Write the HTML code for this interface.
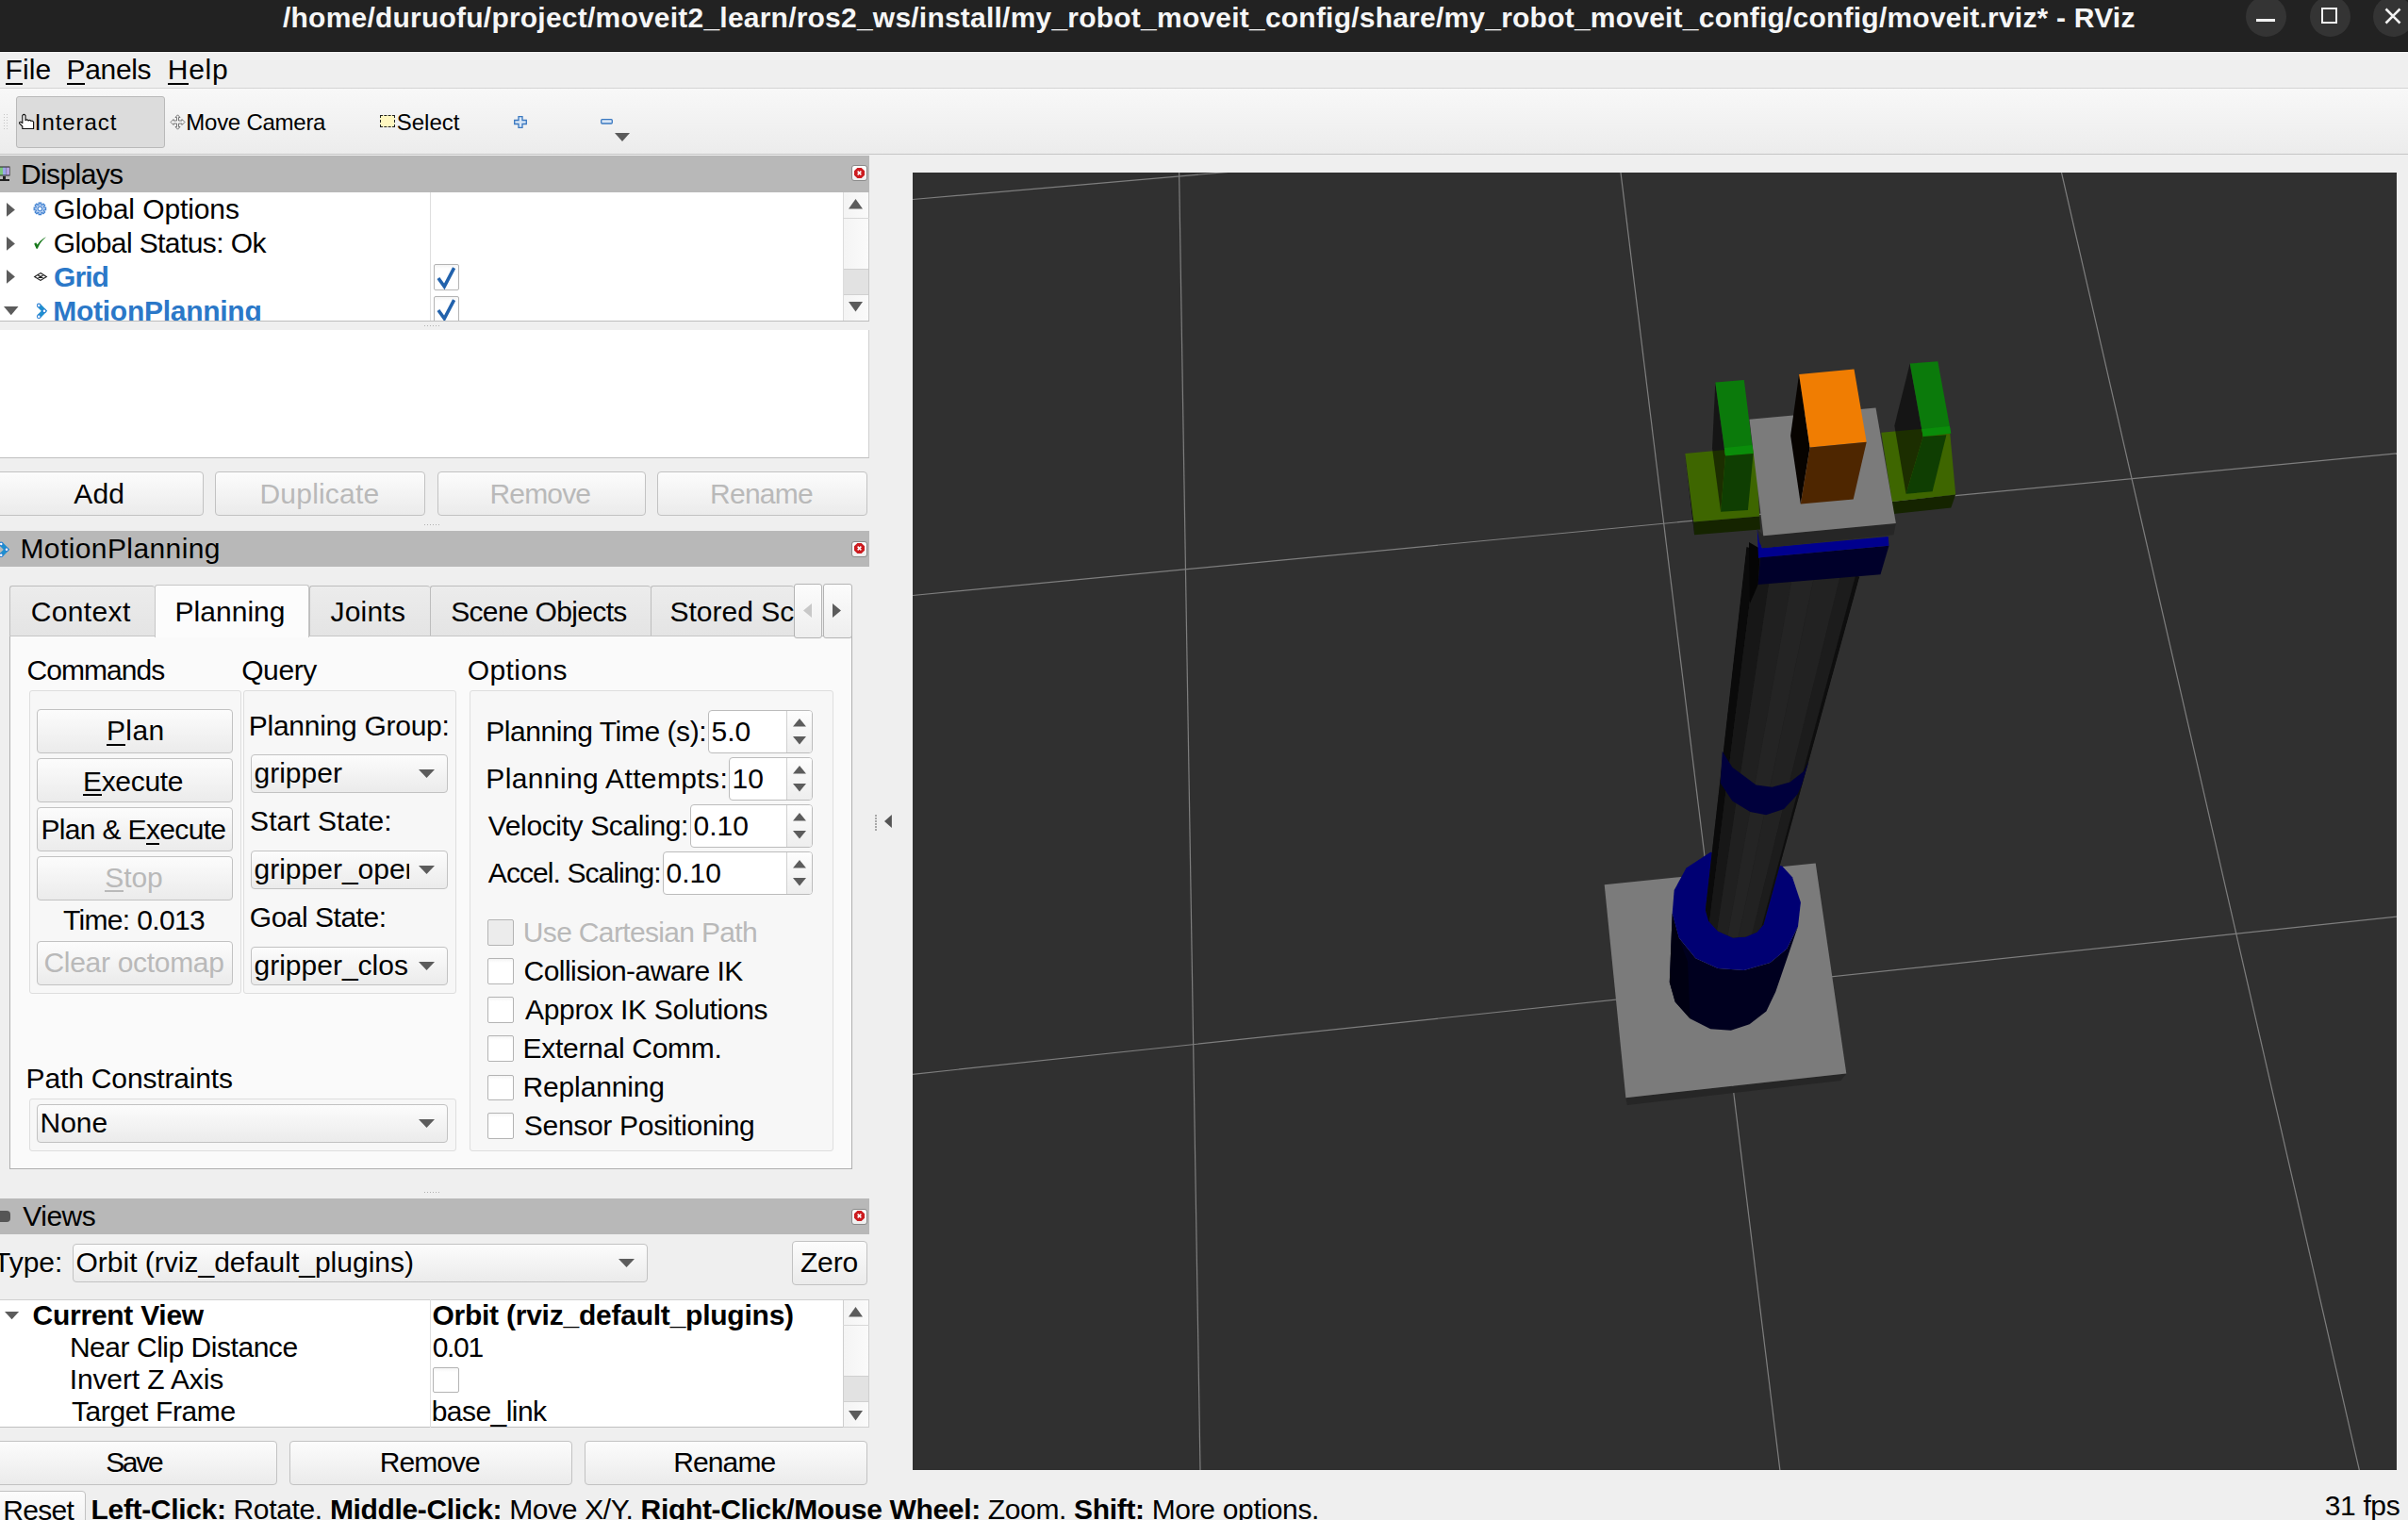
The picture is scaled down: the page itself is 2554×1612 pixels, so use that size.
<!DOCTYPE html>
<html><head><meta charset="utf-8">
<style>
*{box-sizing:border-box;margin:0;padding:0}
html,body{width:2554px;height:1612px;overflow:hidden}
body{position:relative;background:#efefef;font-family:"Liberation Sans",sans-serif;font-size:30px;color:#000}
.a{position:absolute}
.t{position:absolute;white-space:nowrap;line-height:1}
u{text-decoration:none;border-bottom:2px solid currentColor;display:inline-block;line-height:0.93}
svg{overflow:visible}
</style></head>
<body>
<div class="a" style="left:0.0px;top:0.0px;width:2554.0px;height:54.0px;background:#222222"></div>
<div class="a" style="left:0.0px;top:54.0px;width:2554.0px;height:1.0px;background:#0e0e0e"></div>
<div class="t" style="left:300.0px;top:3.9px;font-size:30px;font-weight:bold;color:#f6f6f6;letter-spacing:0.22px">/home/duruofu/project/moveit2_learn/ros2_ws/install/my_robot_moveit_config/share/my_robot_moveit_config/config/moveit.rviz* - RViz</div>
<div class="a" style="left:2381.5px;top:-4.5px;width:43px;height:43px;border-radius:50%;background:#343434"></div>
<div class="a" style="left:2449.5px;top:-4.5px;width:43px;height:43px;border-radius:50%;background:#343434"></div>
<div class="a" style="left:2516.5px;top:-4.5px;width:43px;height:43px;border-radius:50%;background:#343434"></div>
<div class="a" style="left:2393px;top:20px;width:20px;height:2.5px;background:#f2f2f2"></div>
<div class="a" style="left:2462px;top:8px;width:17px;height:17px;border:2.4px solid #f2f2f2"></div>
<svg class="a" style="left:2529px;top:8px" width="18" height="18"><path d="M1.5 1.5L16.5 16.5M16.5 1.5L1.5 16.5" stroke="#f2f2f2" stroke-width="2.6"/></svg>
<div class="a" style="left:0.0px;top:55.0px;width:2554.0px;height:38.0px;background:#efefef"></div>
<div class="a" style="left:0.0px;top:93.0px;width:2554.0px;height:1.0px;background:#d4d4d4"></div>
<div class="t" style="left:5.5px;top:59.3px;font-size:30px;letter-spacing:0.150px;"><u>F</u>ile</div>
<div class="t" style="left:70.5px;top:59.3px;font-size:30px;letter-spacing:-0.330px;"><u>P</u>anels</div>
<div class="t" style="left:177.7px;top:59.3px;font-size:30px;letter-spacing:0.767px;"><u>H</u>elp</div>
<div class="a" style="left:0.0px;top:94.0px;width:2554.0px;height:69.0px;background:linear-gradient(#f8f8f8,#ececec)"></div>
<div class="a" style="left:0.0px;top:163.0px;width:2554.0px;height:1.0px;background:#c6c6c6"></div>
<div class="a" style="left:4.0px;top:121.0px;width:1.0px;height:1.0px;background:#c4c4c4"></div>
<div class="a" style="left:7.0px;top:121.0px;width:1.0px;height:1.0px;background:#c4c4c4"></div>
<div class="a" style="left:4.0px;top:124.0px;width:1.0px;height:1.0px;background:#c4c4c4"></div>
<div class="a" style="left:7.0px;top:124.0px;width:1.0px;height:1.0px;background:#c4c4c4"></div>
<div class="a" style="left:4.0px;top:127.0px;width:1.0px;height:1.0px;background:#c4c4c4"></div>
<div class="a" style="left:7.0px;top:127.0px;width:1.0px;height:1.0px;background:#c4c4c4"></div>
<div class="a" style="left:4.0px;top:130.0px;width:1.0px;height:1.0px;background:#c4c4c4"></div>
<div class="a" style="left:7.0px;top:130.0px;width:1.0px;height:1.0px;background:#c4c4c4"></div>
<div class="a" style="left:4.0px;top:133.0px;width:1.0px;height:1.0px;background:#c4c4c4"></div>
<div class="a" style="left:7.0px;top:133.0px;width:1.0px;height:1.0px;background:#c4c4c4"></div>
<div class="a" style="left:4.0px;top:136.0px;width:1.0px;height:1.0px;background:#c4c4c4"></div>
<div class="a" style="left:7.0px;top:136.0px;width:1.0px;height:1.0px;background:#c4c4c4"></div>
<div class="a" style="left:17.0px;top:102.0px;width:157.5px;height:54.5px;border:1px solid #b9b9b9;border-radius:3px;background:#dcdcdc"></div>
<svg class="a" style="left:0;top:0" width="1" height="1"><path d="M23.8 136.5 L23.8 134 L20.6 130.8 Q20.3 129 22 129.3 L23.8 130.6 L23.8 122.6 Q25.4 120.2 27 122.6 L27 127.6 Q28.5 126.3 30 127.6 L30 128 Q31.5 126.8 33 128.3 Q34.6 127.6 35.6 129.3 L35.6 136.5 Z" fill="#fff" stroke="#111" stroke-width="1.15" stroke-linejoin="round"/></svg>
<div class="t" style="left:36.8px;top:118.4px;font-size:24px;letter-spacing:0.929px;">Interact</div>
<svg class="a" style="left:180px;top:121px" width="17" height="17" viewBox="0 0 17 17"><path d="M8.5 0.8L11 3.5H9.5V7H13V5.5L16 8.5L13 11.5V10H9.5V13.5H11L8.5 16.2L6 13.5H7.5V10H4V11.5L1 8.5L4 5.5V7H7.5V3.5H6Z" fill="#f4f4f4" stroke="#666" stroke-width="0.9"/></svg>
<div class="t" style="left:197.3px;top:118.4px;font-size:24px;letter-spacing:-0.255px;">Move Camera</div>
<div class="a" style="left:403px;top:122px;width:16px;height:13px;border:1.2px dashed #222;background:#fff7c0"></div>
<div class="t" style="left:420.8px;top:118.3px;font-size:24px;letter-spacing:-0.020px;">Select</div>
<svg class="a" style="left:545px;top:122.5px" width="14" height="13" viewBox="0 0 14 13"><path d="M5 0.7H9V4.5H13.3V8.5H9V12.3H5V8.5H0.7V4.5H5Z" fill="#d8e6f6" stroke="#3a78c0" stroke-width="1.3"/></svg>
<svg class="a" style="left:637px;top:126px" width="13" height="6" viewBox="0 0 13 6"><rect x="0.7" y="0.7" width="11.6" height="4.3" rx="1" fill="#d8e6f6" stroke="#3a78c0" stroke-width="1.3"/></svg>
<svg class="a" style="left:652.0px;top:141.0px" width="16.0" height="9.0"><polygon points="0,0 16,0 8.0,9" fill="#5a5a5a"/></svg>
<div class="a" style="left:0.0px;top:165.0px;width:922.0px;height:39.0px;background:#b8b8b8"></div>
<svg class="a" style="left:-2px;top:176px" width="14" height="18" viewBox="0 0 14 18"><rect x="0.5" y="0.5" width="12" height="10" fill="#222"/><rect x="1.5" y="1.5" width="3.5" height="8" fill="#7ac77a"/><rect x="5" y="1.5" width="3.5" height="8" fill="#9aa6e6"/><rect x="8.5" y="1.5" width="3.5" height="8" fill="#b4a0e0"/><rect x="5" y="11" width="3" height="3" fill="#222"/><rect x="1" y="14" width="11" height="2" fill="#222"/></svg>
<div class="t" style="left:22.0px;top:169.9px;font-size:30px;letter-spacing:-0.607px;">Displays</div>
<div class="a" style="left:902.5px;top:175px;width:17px;height:17px;border:1px solid #8a8a8a;border-radius:3px;background:linear-gradient(#fdfdfd,#eeeeee)"></div>
<svg class="a" style="left:905.5px;top:177.5px" width="11" height="11" viewBox="0 0 10 10"><polygon points="3,0 7,0 10,3 10,7 7,10 3,10 0,7 0,3" fill="#cc1b1f"/><path d="M3.3 3.3L6.7 6.7M6.7 3.3L3.3 6.7" stroke="#fff" stroke-width="1.3"/></svg>
<div class="a" style="left:0.0px;top:204.0px;width:894.0px;height:136.0px;background:#fff"></div>
<div class="a" style="left:456.0px;top:204.0px;width:1.0px;height:136.0px;background:#dedede"></div>
<div class="a" style="left:0.0px;top:340.0px;width:922.0px;height:1.0px;background:#bdbdbd"></div>
<div class="a" style="left:894.0px;top:204.0px;width:28.0px;height:136.0px;background:linear-gradient(90deg,#f4f4f4,#fafafa);border-left:1px solid #dcdcdc;border-right:1px solid #c8c8c8"></div>
<div class="a" style="left:894.0px;top:231.0px;width:28.0px;height:1.0px;background:#d8d8d8"></div>
<div class="a" style="left:895.0px;top:284.5px;width:26.0px;height:28.0px;background:#e2e2e2;border-top:1px solid #d0d0d0;border-bottom:1px solid #d0d0d0"></div>
<svg class="a" style="left:900.0px;top:210.5px" width="15.0" height="10.5"><polygon points="0,10.5 15,10.5 7.5,0" fill="#5c5c5c"/></svg>
<svg class="a" style="left:900.0px;top:320.0px" width="15.0" height="10.5"><polygon points="0,0 15,0 7.5,10.5" fill="#5c5c5c"/></svg>
<div class="a" style="left:0;top:204px;width:894px;height:136px;overflow:hidden">
<svg class="a" style="left:7.3px;top:10.6px" width="8.9" height="14.8"><polygon points="0,0 8.899999999999999,7.4 0,14.8" fill="#5c5c5c"/></svg>
<div class="t" style="left:56.8px;top:3.2px;font-size:30px;letter-spacing:-0.100px;">Global Options</div>
<svg class="a" style="left:7.3px;top:46.5px" width="8.9" height="14.8"><polygon points="0,0 8.899999999999999,7.399999999999999 0,14.799999999999997" fill="#5c5c5c"/></svg>
<div class="t" style="left:56.8px;top:39.1px;font-size:30px;letter-spacing:-0.594px;">Global Status: Ok</div>
<svg class="a" style="left:7.3px;top:82.2px" width="8.9" height="14.8"><polygon points="0,0 8.899999999999999,7.399999999999999 0,14.799999999999997" fill="#5c5c5c"/></svg>
<div class="t" style="left:57.0px;top:74.8px;font-size:30px;font-weight:bold;color:#2b78c8;letter-spacing:-0.933px;">Grid</div>
<svg class="a" style="left:4.0px;top:121.0px" width="15.5" height="9.2"><polygon points="0,0 15.5,0 7.75,9.199999999999989" fill="#5c5c5c"/></svg>
<div class="t" style="left:56.3px;top:110.6px;font-size:30px;font-weight:bold;color:#2b78c8;letter-spacing:-0.273px;">MotionPlanning</div>
</div>
<svg class="a" style="left:0;top:0" width="1" height="1"><path d="M46.79 220.04 L48.67 220.13 L48.67 222.67 L46.79 222.76 L46.47 223.55 L47.73 224.94 L45.94 226.73 L44.55 225.47 L43.76 225.79 L43.67 227.67 L41.13 227.67 L41.04 225.79 L40.25 225.47 L38.86 226.73 L37.07 224.94 L38.33 223.55 L38.01 222.76 L36.13 222.67 L36.13 220.13 L38.01 220.04 L38.33 219.25 L37.07 217.86 L38.86 216.07 L40.25 217.33 L41.04 217.01 L41.13 215.13 L43.67 215.13 L43.76 217.01 L44.55 217.33 L45.94 216.07 L47.73 217.86 L46.47 219.25Z" fill="#b3cdf0" stroke="#3d7fd0" stroke-width="1.1"/><circle cx="42.4" cy="221.4" r="2.4" fill="none" stroke="#3d7fd0" stroke-width="1"/><circle cx="42.4" cy="221.4" r="1.3" fill="#fff"/></svg>
<svg class="a" style="left:0;top:0" width="1" height="1"><path d="M36.2 258.5 L38.2 257.2 L39.6 259.6 C41.5 256.5 44.5 253.2 49 251.2 C45.5 254 42 258 39.8 263.8 L38.6 263.8 Z" fill="#16781a"/></svg>
<svg class="a" style="left:0;top:0" width="1" height="1"><path d="M43 289.6L49.3 293.5L43 297.4L36.7 293.5Z M39.85 291.55L46.15 295.45 M46.15 291.55L39.85 295.45" fill="none" stroke="#1a1a1a" stroke-width="1.15"/></svg>
<svg class="a" style="left:0;top:0" width="1" height="1"><path d="M41.2 323.9L47.0 329.79999999999995L41.2 335.7" fill="none" stroke="#1f8fcf" stroke-width="4.6" stroke-linejoin="miter"/><circle cx="41.2" cy="323.9" r="2.3" fill="#2a7fd4"/><circle cx="41.2" cy="323.9" r="1.25" fill="#fff"/><circle cx="47.0" cy="329.79999999999995" r="2.3" fill="#2a7fd4"/><circle cx="47.0" cy="329.79999999999995" r="1.25" fill="#fff"/><circle cx="41.2" cy="335.7" r="2.3" fill="#2a7fd4"/><circle cx="41.2" cy="335.7" r="1.25" fill="#fff"/></svg>
<div class="a" style="left:459.5px;top:280.0px;width:27.5px;height:28.0px;border:1px solid #b4b4b4;border-radius:2px;background:linear-gradient(#f4f4f4 0,#fff 4px)"></div>
<svg class="a" style="left:459.5px;top:280.0px" width="27.5" height="28.0" viewBox="0 0 28 28"><path d="M5 15 L11.5 24 L22 4" fill="none" stroke="#2262ac" stroke-width="3.6" stroke-linejoin="miter"/></svg>
<div class="a" style="left:450px;top:300px;width:50px;height:40px;overflow:hidden">
<div class="a" style="left:9.5px;top:14.0px;width:27.5px;height:28.0px;border:1px solid #b4b4b4;border-radius:2px;background:linear-gradient(#f4f4f4 0,#fff 4px)"></div>
<svg class="a" style="left:9.5px;top:14.0px" width="27.5" height="28.0" viewBox="0 0 28 28"><path d="M5 15 L11.5 24 L22 4" fill="none" stroke="#2262ac" stroke-width="3.6" stroke-linejoin="miter"/></svg>
</div>
<div class="a" style="left:450.0px;top:344.5px;width:1.0px;height:1.0px;background:#b0b0b0"></div>
<div class="a" style="left:453.0px;top:344.5px;width:1.0px;height:1.0px;background:#b0b0b0"></div>
<div class="a" style="left:456.0px;top:344.5px;width:1.0px;height:1.0px;background:#b0b0b0"></div>
<div class="a" style="left:459.0px;top:344.5px;width:1.0px;height:1.0px;background:#b0b0b0"></div>
<div class="a" style="left:462.0px;top:344.5px;width:1.0px;height:1.0px;background:#b0b0b0"></div>
<div class="a" style="left:465.0px;top:344.5px;width:1.0px;height:1.0px;background:#b0b0b0"></div>
<div class="a" style="left:0.0px;top:349.5px;width:922.0px;height:136.5px;background:#fff;border-bottom:1px solid #c0c0c0;border-right:1px solid #d0d0d0"></div>
<div class="a" style="left:-8.0px;top:499.5px;width:223.5px;height:47.0px;border:1px solid #c2c2c2;border-radius:4px;background:linear-gradient(#fcfcfc,#ebebeb);"></div>
<div class="t" style="left:78.3px;top:508.5px;font-size:30px;letter-spacing:0.100px;">Add</div>
<div class="a" style="left:228.0px;top:499.5px;width:222.5px;height:47.0px;border:1px solid #c2c2c2;border-radius:4px;background:linear-gradient(#fcfcfc,#ebebeb);"></div>
<div class="t" style="left:275.5px;top:508.5px;font-size:30px;color:#b9b9b9;letter-spacing:0.200px;">Duplicate</div>
<div class="a" style="left:463.5px;top:499.5px;width:221.0px;height:47.0px;border:1px solid #c2c2c2;border-radius:4px;background:linear-gradient(#fcfcfc,#ebebeb);"></div>
<div class="t" style="left:519.5px;top:508.5px;font-size:30px;color:#b9b9b9;letter-spacing:-0.840px;">Remove</div>
<div class="a" style="left:697.0px;top:499.5px;width:223.0px;height:47.0px;border:1px solid #c2c2c2;border-radius:4px;background:linear-gradient(#fcfcfc,#ebebeb);"></div>
<div class="t" style="left:753.1px;top:508.5px;font-size:30px;color:#b9b9b9;letter-spacing:-0.770px;">Rename</div>
<div class="a" style="left:450.0px;top:556.0px;width:1.0px;height:1.0px;background:#b0b0b0"></div>
<div class="a" style="left:453.0px;top:556.0px;width:1.0px;height:1.0px;background:#b0b0b0"></div>
<div class="a" style="left:456.0px;top:556.0px;width:1.0px;height:1.0px;background:#b0b0b0"></div>
<div class="a" style="left:459.0px;top:556.0px;width:1.0px;height:1.0px;background:#b0b0b0"></div>
<div class="a" style="left:462.0px;top:556.0px;width:1.0px;height:1.0px;background:#b0b0b0"></div>
<div class="a" style="left:465.0px;top:556.0px;width:1.0px;height:1.0px;background:#b0b0b0"></div>
<div class="a" style="left:0.0px;top:563.0px;width:922.0px;height:38.0px;background:#b8b8b8"></div>
<svg class="a" style="left:0;top:0" width="1" height="1"><path d="M1.2 576.9L7.0 582.8L1.2 588.6999999999999" fill="none" stroke="#1f8fcf" stroke-width="4.6" stroke-linejoin="miter"/><circle cx="1.2" cy="576.9" r="2.3" fill="#2a7fd4"/><circle cx="1.2" cy="576.9" r="1.25" fill="#fff"/><circle cx="7.0" cy="582.8" r="2.3" fill="#2a7fd4"/><circle cx="7.0" cy="582.8" r="1.25" fill="#fff"/><circle cx="1.2" cy="588.6999999999999" r="2.3" fill="#2a7fd4"/><circle cx="1.2" cy="588.6999999999999" r="1.25" fill="#fff"/></svg>
<div class="t" style="left:21.4px;top:566.8px;font-size:30px;letter-spacing:0.412px;">MotionPlanning</div>
<div class="a" style="left:902.5px;top:573.5px;width:17px;height:17px;border:1px solid #8a8a8a;border-radius:3px;background:linear-gradient(#fdfdfd,#eeeeee)"></div>
<svg class="a" style="left:905.5px;top:576.0px" width="11" height="11" viewBox="0 0 10 10"><polygon points="3,0 7,0 10,3 10,7 7,10 3,10 0,7 0,3" fill="#cc1b1f"/><path d="M3.3 3.3L6.7 6.7M6.7 3.3L3.3 6.7" stroke="#fff" stroke-width="1.3"/></svg>
<div class="a" style="left:9.5px;top:674.0px;width:894.0px;height:565.5px;background:#fafafa;border:1px solid #b0b0b0;border-top:none"></div>
<div class="a" style="left:9.5px;top:621.0px;width:154.0px;height:54.0px;border:1px solid #bdbdbd;border-right:none;border-radius:3px 3px 0 0;background:linear-gradient(#ececec,#e4e4e4)"></div>
<div class="a" style="left:327.5px;top:621.0px;width:128.0px;height:54.0px;border:1px solid #bdbdbd;border-right:none;border-radius:3px 3px 0 0;background:linear-gradient(#ececec,#e4e4e4)"></div>
<div class="a" style="left:455.5px;top:621.0px;width:234.0px;height:54.0px;border:1px solid #bdbdbd;border-right:none;border-radius:3px 3px 0 0;background:linear-gradient(#ececec,#e4e4e4)"></div>
<div class="a" style="left:689.5px;top:621.0px;width:152.5px;height:54.0px;border:1px solid #bdbdbd;border-right:none;border-radius:3px 3px 0 0;background:linear-gradient(#ececec,#e4e4e4)"></div>
<div class="a" style="left:9.5px;top:674.0px;width:894.0px;height:1.0px;background:#c6c6c6"></div>
<div class="a" style="left:0;top:600px;width:842px;height:80px;overflow:hidden">
<div class="t" style="left:32.8px;top:34.3px;font-size:30px;letter-spacing:0.342px;">Context</div>
<div class="t" style="left:350.5px;top:34.3px;font-size:30px;letter-spacing:0.210px;">Joints</div>
<div class="t" style="left:478.2px;top:34.3px;font-size:30px;letter-spacing:-0.663px;">Scene Objects</div>
<div class="t" style="left:710.5px;top:34.3px;font-size:30px;">Stored Scenes</div>
</div>
<div class="a" style="left:163.5px;top:619.5px;width:164.5px;height:56.0px;border:1px solid #c6c6c6;border-bottom:none;border-radius:3px 3px 0 0;background:#fcfcfc"></div>
<div class="t" style="left:185.5px;top:634.3px;font-size:30px;letter-spacing:0.036px;">Planning</div>
<div class="a" style="left:841.5px;top:619.0px;width:30.8px;height:57.5px;border:1px solid #c2c2c2;border-radius:4px;background:linear-gradient(#fcfcfc,#ebebeb);border-radius:3px;border-color:#b4b4b4;background:linear-gradient(#fcfcfc,#eeeeee)"></div>
<div class="a" style="left:872.5px;top:619.0px;width:31.0px;height:57.5px;border:1px solid #c2c2c2;border-radius:4px;background:linear-gradient(#fcfcfc,#ebebeb);border-radius:3px;border-color:#b4b4b4;background:linear-gradient(#fcfcfc,#eeeeee)"></div>
<svg class="a" style="left:852.0px;top:640.0px" width="9.0" height="15.0"><polygon points="9,0 0,7.5 9,15" fill="#c8c8c8"/></svg>
<svg class="a" style="left:883.0px;top:640.0px" width="9.0" height="15.0"><polygon points="0,0 9,7.5 0,15" fill="#5c5c5c"/></svg>
<div class="t" style="left:28.6px;top:695.6px;font-size:30px;letter-spacing:-0.957px;">Commands</div>
<div class="t" style="left:256.2px;top:695.6px;font-size:30px;letter-spacing:-0.400px;">Query</div>
<div class="t" style="left:495.8px;top:695.6px;font-size:30px;letter-spacing:0.392px;">Options</div>
<div class="a" style="left:30.5px;top:731.5px;width:225.0px;height:322.0px;border:1px solid #dedede;border-radius:3px;background:#f7f7f7"></div>
<div class="a" style="left:257.5px;top:731.5px;width:226.5px;height:322.0px;border:1px solid #dedede;border-radius:3px;background:#f7f7f7"></div>
<div class="a" style="left:497.5px;top:731.5px;width:386.0px;height:489.0px;border:1px solid #dedede;border-radius:3px;background:#f7f7f7"></div>
<div class="a" style="left:30.5px;top:1164.5px;width:453.5px;height:56.0px;border:1px solid #dedede;border-radius:3px;background:#f7f7f7"></div>
<div class="a" style="left:38.5px;top:751.5px;width:208.0px;height:47.0px;border:1px solid #c2c2c2;border-radius:4px;background:linear-gradient(#fcfcfc,#ebebeb);"></div>
<div class="t" style="left:112.9px;top:759.9px;font-size:30px;letter-spacing:0.433px;"><u>P</u>lan</div>
<div class="a" style="left:38.5px;top:803.5px;width:208.0px;height:47.0px;border:1px solid #c2c2c2;border-radius:4px;background:linear-gradient(#fcfcfc,#ebebeb);"></div>
<div class="t" style="left:88.0px;top:813.6px;font-size:30px;letter-spacing:-0.325px;"><u>E</u>xecute</div>
<div class="a" style="left:38.5px;top:855.5px;width:208.0px;height:47.0px;border:1px solid #c2c2c2;border-radius:4px;background:linear-gradient(#fcfcfc,#ebebeb);"></div>
<div class="t" style="left:43.4px;top:865.1px;font-size:30px;letter-spacing:-0.654px;">Plan &amp; E<u>x</u>ecute</div>
<div class="a" style="left:38.5px;top:907.5px;width:208.0px;height:47.0px;border:1px solid #c2c2c2;border-radius:4px;background:linear-gradient(#fcfcfc,#ebebeb);"></div>
<div class="t" style="left:111.3px;top:915.6px;font-size:30px;color:#b9b9b9;letter-spacing:-0.083px;"><u>S</u>top</div>
<div class="t" style="left:66.9px;top:960.9px;font-size:30px;letter-spacing:-0.650px;">Time: 0.013</div>
<div class="a" style="left:38.5px;top:997.5px;width:208.0px;height:47.0px;border:1px solid #c2c2c2;border-radius:4px;background:linear-gradient(#fcfcfc,#ebebeb);"></div>
<div class="t" style="left:46.5px;top:1006.2px;font-size:30px;color:#b9b9b9;letter-spacing:-0.308px;">Clear octomap</div>
<div class="t" style="left:263.8px;top:754.6px;font-size:30px;letter-spacing:-0.268px;">Planning Group:</div>
<div class="a" style="left:265.5px;top:799.5px;width:209.0px;height:41.0px;border:1px solid #c2c2c2;border-radius:4px;background:linear-gradient(#fcfcfc,#ebebeb);"></div>
<div class="t" style="left:269.5px;top:805.1px;font-size:30px;">gripper</div>
<svg class="a" style="left:444.0px;top:815.5px" width="17.0" height="9.0"><polygon points="0,0 17.0,0 8.5,9.0" fill="#5c5c5c"/></svg>
<div class="t" style="left:265.1px;top:856.3px;font-size:30px;letter-spacing:0.041px;">Start State:</div>
<div class="a" style="left:265.5px;top:901.5px;width:209.0px;height:41.0px;border:1px solid #c2c2c2;border-radius:4px;background:linear-gradient(#fcfcfc,#ebebeb);"></div>
<div class="a" style="left:269.5px;top:902.5px;width:164.2px;height:39.0px;overflow:hidden">
<div class="t" style="left:0.0px;top:4.6px;font-size:30px;">gripper_open</div>
</div>
<svg class="a" style="left:444.0px;top:917.5px" width="17.0" height="9.0"><polygon points="0,0 17.0,0 8.5,9.0" fill="#5c5c5c"/></svg>
<div class="t" style="left:264.8px;top:957.8px;font-size:30px;letter-spacing:-0.490px;">Goal State:</div>
<div class="a" style="left:265.5px;top:1003.5px;width:209.0px;height:41.0px;border:1px solid #c2c2c2;border-radius:4px;background:linear-gradient(#fcfcfc,#ebebeb);"></div>
<div class="a" style="left:269.5px;top:1004.5px;width:164.2px;height:39.0px;overflow:hidden">
<div class="t" style="left:0.0px;top:4.6px;font-size:30px;">gripper_closed</div>
</div>
<svg class="a" style="left:444.0px;top:1019.5px" width="17.0" height="9.0"><polygon points="0,0 17.0,0 8.5,9.0" fill="#5c5c5c"/></svg>
<div class="t" style="left:515.3px;top:761.0px;font-size:30px;letter-spacing:-0.444px;">Planning Time (s):</div>
<div class="a" style="left:750.5px;top:752.5px;width:111.5px;height:46.0px;border:1px solid #bcbcbc;border-radius:4px;background:#fff"></div>
<div class="a" style="left:833.5px;top:753.5px;width:27.5px;height:44.0px;border-left:1px solid #d0d0d0;border-radius:0 3px 3px 0;background:linear-gradient(#fdfdfd,#eeeeee)"></div>
<svg class="a" style="left:840.5px;top:761.5px" width="14.0" height="8.5"><polygon points="0,8.5 14.0,8.5 7.0,0" fill="#5c5c5c"/></svg>
<svg class="a" style="left:840.5px;top:781.0px" width="14.0" height="8.5"><polygon points="0,0 14.0,0 7.0,8.5" fill="#5c5c5c"/></svg>
<div class="t" style="left:754.5px;top:761.1px;font-size:30px;">5.0</div>
<div class="t" style="left:515.3px;top:811.1px;font-size:30px;letter-spacing:0.371px;">Planning Attempts:</div>
<div class="a" style="left:772.5px;top:802.5px;width:89.5px;height:46.0px;border:1px solid #bcbcbc;border-radius:4px;background:#fff"></div>
<div class="a" style="left:833.5px;top:803.5px;width:27.5px;height:44.0px;border-left:1px solid #d0d0d0;border-radius:0 3px 3px 0;background:linear-gradient(#fdfdfd,#eeeeee)"></div>
<svg class="a" style="left:840.5px;top:811.5px" width="14.0" height="8.5"><polygon points="0,8.5 14.0,8.5 7.0,0" fill="#5c5c5c"/></svg>
<svg class="a" style="left:840.5px;top:831.0px" width="14.0" height="8.5"><polygon points="0,0 14.0,0 7.0,8.5" fill="#5c5c5c"/></svg>
<div class="t" style="left:776.5px;top:811.1px;font-size:30px;">10</div>
<div class="t" style="left:517.8px;top:860.9px;font-size:30px;letter-spacing:-0.366px;">Velocity Scaling:</div>
<div class="a" style="left:731.5px;top:852.5px;width:130.5px;height:46.0px;border:1px solid #bcbcbc;border-radius:4px;background:#fff"></div>
<div class="a" style="left:833.5px;top:853.5px;width:27.5px;height:44.0px;border-left:1px solid #d0d0d0;border-radius:0 3px 3px 0;background:linear-gradient(#fdfdfd,#eeeeee)"></div>
<svg class="a" style="left:840.5px;top:861.5px" width="14.0" height="8.5"><polygon points="0,8.5 14.0,8.5 7.0,0" fill="#5c5c5c"/></svg>
<svg class="a" style="left:840.5px;top:881.0px" width="14.0" height="8.5"><polygon points="0,0 14.0,0 7.0,8.5" fill="#5c5c5c"/></svg>
<div class="t" style="left:735.5px;top:861.1px;font-size:30px;">0.10</div>
<div class="t" style="left:517.8px;top:910.6px;font-size:30px;letter-spacing:-0.918px;">Accel. Scaling:</div>
<div class="a" style="left:702.5px;top:902.5px;width:159.5px;height:46.0px;border:1px solid #bcbcbc;border-radius:4px;background:#fff"></div>
<div class="a" style="left:833.5px;top:903.5px;width:27.5px;height:44.0px;border-left:1px solid #d0d0d0;border-radius:0 3px 3px 0;background:linear-gradient(#fdfdfd,#eeeeee)"></div>
<svg class="a" style="left:840.5px;top:911.5px" width="14.0" height="8.5"><polygon points="0,8.5 14.0,8.5 7.0,0" fill="#5c5c5c"/></svg>
<svg class="a" style="left:840.5px;top:931.0px" width="14.0" height="8.5"><polygon points="0,0 14.0,0 7.0,8.5" fill="#5c5c5c"/></svg>
<div class="t" style="left:706.5px;top:911.1px;font-size:30px;">0.10</div>
<div class="a" style="left:517.0px;top:975.3px;width:28.0px;height:27.5px;border:1px solid #b4b4b4;border-radius:2px;background:#ececec"></div>
<div class="t" style="left:554.8px;top:973.9px;font-size:30px;color:#b9b9b9;letter-spacing:-0.659px;">Use Cartesian Path</div>
<div class="a" style="left:517.0px;top:1016.3px;width:28.0px;height:27.5px;border:1px solid #b4b4b4;border-radius:2px;background:linear-gradient(#f4f4f4 0,#fff 4px)"></div>
<div class="t" style="left:555.5px;top:1014.9px;font-size:30px;letter-spacing:-0.529px;">Collision-aware IK</div>
<div class="a" style="left:517.0px;top:1057.4px;width:28.0px;height:27.5px;border:1px solid #b4b4b4;border-radius:2px;background:linear-gradient(#f4f4f4 0,#fff 4px)"></div>
<div class="t" style="left:557.0px;top:1056.0px;font-size:30px;letter-spacing:-0.328px;">Approx IK Solutions</div>
<div class="a" style="left:517.0px;top:1098.4px;width:28.0px;height:27.5px;border:1px solid #b4b4b4;border-radius:2px;background:linear-gradient(#f4f4f4 0,#fff 4px)"></div>
<div class="t" style="left:554.5px;top:1097.0px;font-size:30px;letter-spacing:-0.285px;">External Comm.</div>
<div class="a" style="left:517.0px;top:1139.5px;width:28.0px;height:27.5px;border:1px solid #b4b4b4;border-radius:2px;background:linear-gradient(#f4f4f4 0,#fff 4px)"></div>
<div class="t" style="left:554.5px;top:1138.1px;font-size:30px;letter-spacing:-0.139px;">Replanning</div>
<div class="a" style="left:517.0px;top:1180.4px;width:28.0px;height:27.5px;border:1px solid #b4b4b4;border-radius:2px;background:linear-gradient(#f4f4f4 0,#fff 4px)"></div>
<div class="t" style="left:555.8px;top:1179.0px;font-size:30px;letter-spacing:-0.306px;">Sensor Positioning</div>
<div class="t" style="left:27.6px;top:1128.8px;font-size:30px;letter-spacing:-0.157px;">Path Constraints</div>
<div class="a" style="left:38.5px;top:1170.5px;width:436.0px;height:41.0px;border:1px solid #c2c2c2;border-radius:4px;background:linear-gradient(#fcfcfc,#ebebeb);"></div>
<div class="t" style="left:42.5px;top:1176.1px;font-size:30px;">None</div>
<svg class="a" style="left:444.0px;top:1186.5px" width="17.0" height="9.0"><polygon points="0,0 17.0,0 8.5,9.0" fill="#5c5c5c"/></svg>
<div class="a" style="left:450.0px;top:1264.0px;width:1.0px;height:1.0px;background:#b0b0b0"></div>
<div class="a" style="left:453.0px;top:1264.0px;width:1.0px;height:1.0px;background:#b0b0b0"></div>
<div class="a" style="left:456.0px;top:1264.0px;width:1.0px;height:1.0px;background:#b0b0b0"></div>
<div class="a" style="left:459.0px;top:1264.0px;width:1.0px;height:1.0px;background:#b0b0b0"></div>
<div class="a" style="left:462.0px;top:1264.0px;width:1.0px;height:1.0px;background:#b0b0b0"></div>
<div class="a" style="left:465.0px;top:1264.0px;width:1.0px;height:1.0px;background:#b0b0b0"></div>
<div class="a" style="left:0.0px;top:1271.0px;width:922.0px;height:38.0px;background:#b8b8b8"></div>
<div class="a" style="left:-3px;top:1284px;width:14px;height:12px;border-radius:4px;background:#555"></div>
<div class="t" style="left:24.3px;top:1275.1px;font-size:30px;letter-spacing:-0.525px;">Views</div>
<div class="a" style="left:902.5px;top:1281.5px;width:17px;height:17px;border:1px solid #8a8a8a;border-radius:3px;background:linear-gradient(#fdfdfd,#eeeeee)"></div>
<svg class="a" style="left:905.5px;top:1284.0px" width="11" height="11" viewBox="0 0 10 10"><polygon points="3,0 7,0 10,3 10,7 7,10 3,10 0,7 0,3" fill="#cc1b1f"/><path d="M3.3 3.3L6.7 6.7M6.7 3.3L3.3 6.7" stroke="#fff" stroke-width="1.3"/></svg>
<div class="t" style="left:-7.0px;top:1323.8px;font-size:30px;">Type:</div>
<div class="a" style="left:76.5px;top:1318.5px;width:610.0px;height:41.0px;border:1px solid #c2c2c2;border-radius:4px;background:linear-gradient(#fcfcfc,#ebebeb);"></div>
<div class="t" style="left:80.5px;top:1324.1px;font-size:30px;">Orbit (rviz_default_plugins)</div>
<svg class="a" style="left:656.0px;top:1334.5px" width="17.0" height="9.0"><polygon points="0,0 17.0,0 8.5,9.0" fill="#5c5c5c"/></svg>
<div class="a" style="left:840.0px;top:1315.5px;width:79.5px;height:47.0px;border:1px solid #c2c2c2;border-radius:4px;background:linear-gradient(#fcfcfc,#ebebeb);"></div>
<div class="t" style="left:848.9px;top:1323.8px;font-size:30px;letter-spacing:-0.133px;">Zero</div>
<div class="a" style="left:0.0px;top:1377.5px;width:894.0px;height:136.5px;background:#fff;border-top:1px solid #d0d0d0;border-bottom:1px solid #c0c0c0"></div>
<div class="a" style="left:456.0px;top:1378.0px;width:1.0px;height:136.0px;background:#dedede"></div>
<div class="a" style="left:894.0px;top:1377.5px;width:28.0px;height:136.5px;background:linear-gradient(90deg,#f4f4f4,#fafafa);border:1px solid #cfcfcf"></div>
<div class="a" style="left:894.0px;top:1405.0px;width:28.0px;height:1.0px;background:#d8d8d8"></div>
<div class="a" style="left:895.0px;top:1458.5px;width:26.0px;height:28.0px;background:#e2e2e2;border-top:1px solid #d0d0d0;border-bottom:1px solid #d0d0d0"></div>
<svg class="a" style="left:900.0px;top:1386.0px" width="15.0" height="10.5"><polygon points="0,10.5 15,10.5 7.5,0" fill="#5c5c5c"/></svg>
<svg class="a" style="left:900.0px;top:1496.0px" width="15.0" height="10.5"><polygon points="0,0 15,0 7.5,10.5" fill="#5c5c5c"/></svg>
<svg class="a" style="left:4.6px;top:1390.8px" width="15.1" height="8.2"><polygon points="0,0 15.1,0 7.55,8.200000000000045" fill="#5c5c5c"/></svg>
<div class="t" style="left:34.6px;top:1380.2px;font-size:30px;font-weight:bold;letter-spacing:-0.264px;">Current View</div>
<div class="t" style="left:73.9px;top:1414.0px;font-size:30px;letter-spacing:-0.465px;">Near Clip Distance</div>
<div class="t" style="left:73.7px;top:1447.7px;font-size:30px;letter-spacing:-0.121px;">Invert Z Axis</div>
<div class="t" style="left:75.9px;top:1481.7px;font-size:30px;letter-spacing:-0.377px;">Target Frame</div>
<div class="t" style="left:458.4px;top:1380.2px;font-size:30px;font-weight:bold;letter-spacing:-0.235px;">Orbit (rviz_default_plugins)</div>
<div class="t" style="left:458.7px;top:1414.0px;font-size:30px;letter-spacing:-1.300px;">0.01</div>
<div class="a" style="left:459.0px;top:1450.0px;width:27.5px;height:26.5px;border:1px solid #b4b4b4;border-radius:2px;background:linear-gradient(#f4f4f4 0,#fff 4px)"></div>
<div class="t" style="left:457.7px;top:1481.7px;font-size:30px;letter-spacing:-0.544px;">base_link</div>
<div class="a" style="left:-8.0px;top:1527.5px;width:301.5px;height:47.0px;border:1px solid #c2c2c2;border-radius:4px;background:linear-gradient(#fcfcfc,#ebebeb);"></div>
<div class="t" style="left:112.2px;top:1536.1px;font-size:30px;letter-spacing:-2.333px;">Save</div>
<div class="a" style="left:306.5px;top:1527.5px;width:300.0px;height:47.0px;border:1px solid #c2c2c2;border-radius:4px;background:linear-gradient(#fcfcfc,#ebebeb);"></div>
<div class="t" style="left:402.8px;top:1536.1px;font-size:30px;letter-spacing:-0.960px;">Remove</div>
<div class="a" style="left:619.5px;top:1527.5px;width:300.0px;height:47.0px;border:1px solid #c2c2c2;border-radius:4px;background:linear-gradient(#fcfcfc,#ebebeb);"></div>
<div class="t" style="left:714.2px;top:1536.1px;font-size:30px;letter-spacing:-0.870px;">Rename</div>
<div class="a" style="left:-8.0px;top:1580.5px;width:98.5px;height:59.5px;border:1px solid #c2c2c2;border-radius:4px;background:linear-gradient(#fcfcfc,#ebebeb);"></div>
<div class="t" style="left:3.3px;top:1586.6px;font-size:30px;letter-spacing:-0.712px;">Reset</div>
<div class="t" style="left:96.6px;top:1585.6px;font-size:30px;letter-spacing:-0.34px"><b>Left-Click:</b> Rotate. <b>Middle-Click:</b> Move X/Y. <b>Right-Click/Mouse Wheel:</b> Zoom. <b>Shift:</b> More options.</div>
<div class="t" style="left:2465.8px;top:1582.4px;font-size:30px;letter-spacing:-0.370px;">31 fps</div>
<svg class="a" style="left:937.9px;top:864.0px" width="7.9" height="14.0"><polygon points="7.899999999999977,0 0,7.0 7.899999999999977,14" fill="#555555"/></svg>
<div class="a" style="left:928.0px;top:864.0px;width:1.5px;height:1.5px;background:#a8a8a8"></div>
<div class="a" style="left:928.0px;top:867.0px;width:1.5px;height:1.5px;background:#a8a8a8"></div>
<div class="a" style="left:928.0px;top:870.0px;width:1.5px;height:1.5px;background:#a8a8a8"></div>
<div class="a" style="left:928.0px;top:873.0px;width:1.5px;height:1.5px;background:#a8a8a8"></div>
<div class="a" style="left:928.0px;top:876.0px;width:1.5px;height:1.5px;background:#a8a8a8"></div>
<div class="a" style="left:928.0px;top:879.0px;width:1.5px;height:1.5px;background:#a8a8a8"></div>
<svg class="a" style="left:968px;top:183px;overflow:hidden" width="1574" height="1376" viewBox="968 183 1574 1376">
<rect x="968" y="183" width="1574" height="1376" fill="#303030"/>
<line x1="900" y1="217.40853658536585" x2="2600" y2="69.69512195121953" stroke="#7e7e7e" stroke-width="1.2"/>
<line x1="900" y1="638.0105463786531" x2="2600" y2="475.2468869123253" stroke="#7e7e7e" stroke-width="1.2"/>
<line x1="900" y1="1146.523379923761" x2="2600" y2="965.9388818297332" stroke="#7e7e7e" stroke-width="1.2"/>
<line x1="1250.0623999999998" y1="150" x2="1273.684218181818" y2="1600" stroke="#7e7e7e" stroke-width="1.2"/>
<line x1="1714.9499781881634" y1="150" x2="1892.905482041588" y2="1600" stroke="#7e7e7e" stroke-width="1.2"/>
<line x1="2178.9254035189765" y1="150" x2="2511.7485822306235" y2="1600" stroke="#7e7e7e" stroke-width="1.2"/>
<polygon points="1724.4,1164.2 1958.3,1138.5 1952.5,1146.0 1725.8,1172.0" fill="#262626" />
<polygon points="1701.7,938.2 1925.7,915.5 1958.3,1138.5 1724.4,1164.2" fill="#7b7b7b" />
<polygon points="1773.7,968.8 1770.8,1041.8 1776.7,1062.6 1792.5,1080.3 1814.2,1091.2 1835.9,1092.7 1855.6,1086.2 1873.4,1072.4 1883.3,1051.7 1907.0,982.6 1895.1,1006.3 1877.4,1021.1 1849.7,1029.0 1822.1,1027.0 1798.4,1016.2 1780.7,994.5" fill="#00001f" />
<polygon points="1773.7,968.8 1770.8,1041.8 1776.7,1062.6 1792.5,1080.3 1790.0,1020.0 1780.7,994.5" fill="#000012" />
<polygon points="1814.2,903.7 1788.5,920.5 1775.7,944.1 1773.7,968.8 1780.7,994.5 1798.4,1016.2 1822.1,1027.0 1849.7,1029.0 1877.4,1021.1 1895.1,1006.3 1907.0,982.6 1909.9,957.0 1901.0,930.3 1890.2,918.5" fill="#000073" />
<clipPath id="colclip"><polygon points="1852.4,580.0 1972.3,611.6 1870.4,980.6 1863.5,988.5 1851.7,993.5 1837.9,994.5 1822.1,987.6 1812.2,976.7 1808.3,962.9"/></clipPath><g clip-path="url(#colclip)">
<polygon points="1852.4,580.0 1972.3,611.6 1866.0,1000.0 1805.5,995.0" fill="#1c1c1c" />
<polygon points="1852.4,580.0 1862.8,582.7 1810.8,995.4 1805.5,995.0" fill="#0a0a0a" />
<polygon points="1862.8,582.7 1880.9,587.5 1819.9,996.2 1810.8,995.4" fill="#171717" />
<polygon points="1880.9,587.5 1904.2,593.7 1831.6,997.2 1819.9,996.2" fill="#202020" />
<polygon points="1904.2,593.7 1926.7,599.6 1843.0,998.1 1831.6,997.2" fill="#242424" />
<polygon points="1926.7,599.6 1952.9,606.5 1856.2,999.2 1843.0,998.1" fill="#222222" />
<polygon points="1952.9,606.5 1968.1,610.5 1863.9,999.8 1856.2,999.2" fill="#1c1c1c" />
<polygon points="1968.1,610.5 1972.3,611.6 1866.0,1000.0 1863.9,999.8" fill="#0e0e0e" />
</g>
<polygon points="1826.8,796.8 1837.4,813.7 1862.6,832.6 1879.5,834.7 1898.4,829.5 1913.2,817.9 1918.4,807.4 1911.0,832.6 1906.8,842.1 1892.1,857.9 1873.2,864.2 1856.3,861.0 1837.4,849.5 1824.7,830.5" fill="#00003c" />
<polygon points="1855.0,575.0 1867.0,582.0 1864.6,620.0 1856.0,640.0" fill="#050505" />
<polygon points="1867.0,591.2 2003.5,578.8 1994.5,609.3 1864.6,620.0" fill="#00002a" />
<polygon points="1863.7,560.8 1868.7,581.3 2002.7,569.0 2003.5,578.8 1867.8,591.2 1865.0,592.0" fill="#00008e" />
<polygon points="1787.3,481.0 1796.3,553.4 1797.1,567.3 1790.0,505.0" fill="#050800" />
<polygon points="1796.3,553.4 1866.2,547.6 1867.0,561.6 1797.1,567.3" fill="#152400" />
<polygon points="1787.3,481.0 1862.0,474.0 1866.2,547.6 1796.3,553.4" fill="#3e6600" />
<polygon points="2006.8,532.0 2074.2,524.6 2069.3,538.6 2008.4,545.1" fill="#152400" />
<polygon points="1995.3,458.8 2067.6,452.2 2074.2,524.6 2006.8,532.0" fill="#3e6600" />
<polygon points="1863.7,560.8 1870.3,568.2 2010.9,555.0 2008.4,567.3 1869.5,581.3 1866.0,575.0" fill="#262626" />
<polygon points="1855.5,444.8 1989.5,432.5 2010.9,555.0 1870.3,568.2" fill="#7b7b7b" />
<polygon points="1819.3,405.4 1830.0,483.5 1825.1,542.7 1816.0,475.2" fill="#000" fill-opacity="0.55"/>
<polygon points="1819.3,405.4 1849.8,402.9 1859.6,481.0 1830.0,483.5" fill="#0b7a0b" />
<polygon points="1828.8,475.0 1858.5,472.0 1859.6,481.0 1830.0,483.5" fill="#0a8d0a" />
<polygon points="1830.0,483.5 1859.6,481.0 1853.9,541.0 1825.1,542.7" fill="#0f3e02" />
<polygon points="1908.1,397.1 1919.6,474.4 1909.8,534.4 1899.1,462.1" fill="#070300" />
<polygon points="1908.1,397.1 1966.5,391.4 1979.7,468.7 1919.6,474.4" fill="#f07d02" />
<polygon points="1919.6,474.4 1979.7,468.7 1965.7,529.5 1909.8,534.4" fill="#4e2600" />
<polygon points="2025.7,385.6 2039.7,462.9 2021.6,523.8 2009.3,451.4" fill="#000" fill-opacity="0.55"/>
<polygon points="2025.7,385.6 2055.3,383.2 2069.3,459.6 2039.7,462.9" fill="#0b7a0b" />
<polygon points="2038.3,455.0 2067.9,452.0 2069.3,459.6 2039.7,462.9" fill="#0a8d0a" />
<polygon points="2039.7,462.9 2064.4,461.3 2049.6,521.3 2021.6,523.8" fill="#0f3e02" />
</svg>
</body></html>
